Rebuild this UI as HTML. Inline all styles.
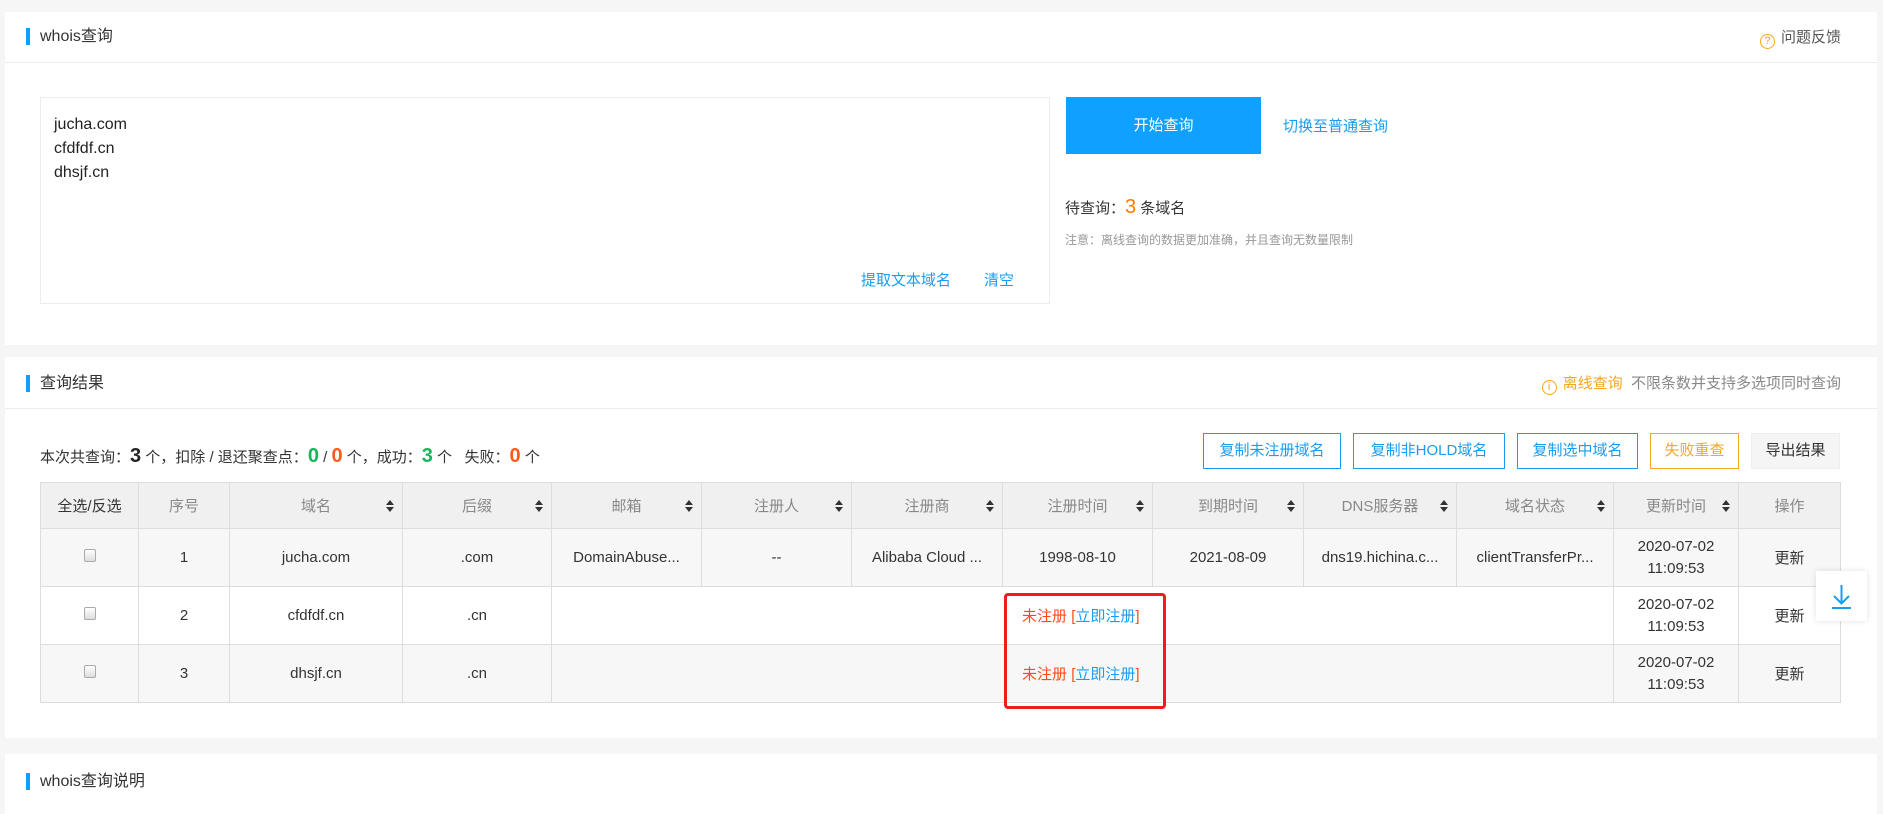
<!DOCTYPE html>
<html><head><meta charset="utf-8"><style>
*{box-sizing:border-box;margin:0;padding:0}
body{width:1883px;height:804px;background:#f6f6f6;font-family:"Liberation Sans","Noto Sans CJK SC",sans-serif;color:#333;position:relative;overflow:hidden;font-size:15px}
.a{position:absolute}
.panel{position:absolute;left:5px;width:1872px;background:#fff}
.ph{position:absolute;left:0;right:0;top:0;border-bottom:1px solid #ececec}
.bar{position:absolute;left:21px;width:4px;height:17px;background:#109ffe}
.tt{position:absolute;left:35px;font-size:16px;color:#333;line-height:20px}
.btn{position:absolute;top:433px;height:36px;border:1px solid #1a9cf0;color:#1a9cf0;font-size:15px;text-align:center;line-height:34px}
table{position:absolute;left:40px;top:482px;width:1800px;border-collapse:collapse;table-layout:fixed}
td,th{border:1px solid #ddd;text-align:center;font-weight:normal;font-size:15px;color:#333;white-space:nowrap;overflow:hidden}
th{height:46px;background:#f0f0f0;color:#888;position:relative}
th.s::after{content:"";position:absolute;right:8px;top:17px;border:4px solid transparent;border-bottom:5px solid #333;border-top:0}
th.s::before{content:"";position:absolute;right:8px;top:24px;border:4px solid transparent;border-top:5px solid #333;border-bottom:0}
tr.r1 td{height:58px;background:#f7f7f7}
tr.r2 td{height:58px;background:#fff}
tr.r3 td{height:58px;background:#f7f7f7}
.cb{display:inline-block;width:12px;height:13px;border:1px solid #aaa;border-radius:2px;background:linear-gradient(#fff,#ddd)}
.lh{line-height:22px}
.ic{display:inline-block;width:15px;height:15px;border:1.5px solid #f5a623;border-radius:50%;color:#f5a623;font-size:11px;line-height:12px;text-align:center;margin-right:6px;vertical-align:-2px}
</style></head><body>
<div class="panel" style="top:12px;height:333px">
  <div class="ph" style="height:51px"></div>
  <div class="bar" style="top:16px"></div>
  <div class="tt" style="top:15px">whois查询</div>
  <div class="a" style="right:36px;top:16px;font-size:15px;color:#555;line-height:20px"><span class="ic">?</span>问题反馈</div>
  <div class="a" style="left:35px;top:85px;width:1010px;height:207px;border:1px solid #ececec"></div>
  <div class="a" style="left:49px;top:101px;font-size:16px;line-height:24px;color:#222">jucha.com<br>cfdfdf.cn<br>dhsjf.cn</div>
  <div class="a" style="left:856px;top:257px;font-size:15px;color:#1a9cf0">提取文本域名</div>
  <div class="a" style="left:979px;top:257px;font-size:15px;color:#1a9cf0">清空</div>
  <div class="a" style="left:1061px;top:85px;width:195px;height:57px;background:#10a0ff;color:#fff;font-size:15px;text-align:center;line-height:57px">开始查询</div>
  <div class="a" style="left:1278px;top:103px;color:#1a9cf0;font-size:15px">切换至普通查询</div>
  <div class="a" style="left:1060px;top:184px;font-size:15px;color:#333">待查询：<span style="color:#ff7a00;font-size:20px">3</span> 条域名</div>
  <div class="a" style="left:1060px;top:219px;font-size:12px;color:#999">注意：离线查询的数据更加准确，并且查询无数量限制</div>
</div>
<div class="panel" style="top:357px;height:381px">
  <div class="ph" style="height:52px"></div>
  <div class="bar" style="top:18px"></div>
  <div class="tt" style="top:17px">查询结果</div>
  <div class="a" style="right:36px;top:17px;font-size:15px;color:#888;line-height:20px"><span class="ic">i</span><span style="color:#f5a623">离线查询</span>&nbsp; 不限条数并支持多选项同时查询</div>
  <div class="a" style="left:35px;top:88px;font-size:15px;color:#333;white-space:nowrap">本次共查询：<b style="font-size:20px;color:#222">3</b> 个，扣除 / 退还聚查点：<b style="font-size:20px;color:#18b55a">0</b> / <b style="font-size:20px;color:#ff5a1f">0</b> 个，成功：<b style="font-size:20px;color:#18b55a">3</b> 个&nbsp;&nbsp; 失败：<b style="font-size:20px;color:#ff5a1f">0</b> 个</div>
</div>
<div class="btn" style="left:1203px;width:138px">复制未注册域名</div>
<div class="btn" style="left:1353px;width:152px">复制非HOLD域名</div>
<div class="btn" style="left:1517px;width:121px">复制选中域名</div>
<div class="btn" style="left:1650px;width:89px;border-color:#f5a623;color:#f5a623">失败重查</div>
<div class="btn" style="left:1751px;width:89px;border-color:#eee;background:#f5f5f5;color:#333">导出结果</div>
<table>
<colgroup><col style="width:98px"><col style="width:91px"><col style="width:173px"><col style="width:149px"><col style="width:150px"><col style="width:150px"><col style="width:151px"><col style="width:150px"><col style="width:151px"><col style="width:153px"><col style="width:157px"><col style="width:125px"><col style="width:102px"></colgroup>
<tr><th style="color:#333">全选/反选</th><th>序号</th><th class="s">域名</th><th class="s">后缀</th><th class="s">邮箱</th><th class="s">注册人</th><th class="s">注册商</th><th class="s">注册时间</th><th class="s">到期时间</th><th class="s">DNS服务器</th><th class="s">域名状态</th><th class="s">更新时间</th><th>操作</th></tr>
<tr class="r1"><td><span class="cb"></span></td><td>1</td><td>jucha.com</td><td>.com</td><td>DomainAbuse...</td><td>--</td><td>Alibaba Cloud ...</td><td>1998-08-10</td><td>2021-08-09</td><td>dns19.hichina.c...</td><td>clientTransferPr...</td><td class="lh">2020-07-02<br>11:09:53</td><td>更新</td></tr>
<tr class="r2"><td><span class="cb"></span></td><td>2</td><td>cfdfdf.cn</td><td>.cn</td><td colspan="7" style="text-align:left;padding-left:470px"><span style="color:#ff4a1a">未注册</span> <span style="color:#ff4a1a">[</span><span style="color:#1a9cf0">立即注册</span><span style="color:#ff4a1a">]</span></td><td class="lh">2020-07-02<br>11:09:53</td><td>更新</td></tr>
<tr class="r3"><td><span class="cb"></span></td><td>3</td><td>dhsjf.cn</td><td>.cn</td><td colspan="7" style="text-align:left;padding-left:470px"><span style="color:#ff4a1a">未注册</span> <span style="color:#ff4a1a">[</span><span style="color:#1a9cf0">立即注册</span><span style="color:#ff4a1a">]</span></td><td class="lh">2020-07-02<br>11:09:53</td><td>更新</td></tr>
</table>
<div class="a" style="left:1004px;top:593px;width:162px;height:116px;border:3px solid #ee1c1c;border-radius:4px"></div>
<div class="a" style="left:1816px;top:571px;width:51px;height:50px;background:#fff;box-shadow:0 0 6px rgba(0,0,0,.12)">
<svg width="51" height="50" viewBox="0 0 51 50"><path d="M25.5 14v18M18 25l7.5 7.5L33 25M16 37h19" stroke="#1a9cf0" stroke-width="2" fill="none"/></svg></div>
<div class="panel" style="top:754px;height:60px">
  <div class="bar" style="top:19px"></div>
  <div class="tt" style="top:18px">whois查询说明</div>
</div>
</body></html>
